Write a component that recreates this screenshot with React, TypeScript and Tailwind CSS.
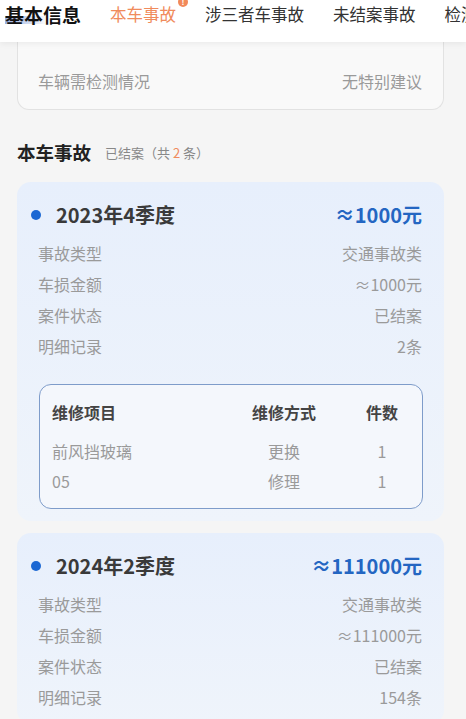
const font = "font-['Noto_Sans_CJK_SC','Noto_Sans',sans-serif]";

type Repair = { item: string; method: string; count: number };

type Accident = {
  period: string;
  amount: string;
  type: string;
  status: string;
  records: string;
  repairs?: Repair[];
};

const accidents: Accident[] = [
  {
    period: "2023年4季度",
    amount: "≈1000元",
    type: "交通事故类",
    status: "已结案",
    records: "2条",
    repairs: [
      { item: "前风挡玻璃", method: "更换", count: 1 },
      { item: "05", method: "修理", count: 1 },
    ],
  },
  {
    period: "2024年2季度",
    amount: "≈111000元",
    type: "交通事故类",
    status: "已结案",
    records: "154条",
  },
];

function Row({ label, value }: { label: string; value: string }) {
  return (
    <div className="flex h-[31px] items-center justify-between text-[16px] text-[#9a9a9a]">
      <span>{label}</span>
      <span>{value}</span>
    </div>
  );
}

function RepairTable({ repairs }: { repairs: Repair[] }) {
  return (
    <div className="mt-[23px] ml-[22px] mr-[21px] rounded-[12px] border-[1.5px] border-[#7e9cca] bg-[#f4f7fc] pb-[12px] pl-3 pr-[10px] pt-[12px]">
      <div className="grid h-[30px] grid-cols-[1fr_100px_60px] items-center gap-x-[18px] text-[16px] font-bold text-[#444]">
        <span>维修项目</span>
        <span className="text-center">维修方式</span>
        <span className="text-center">件数</span>
      </div>
      <div className="mt-[9px]">
        {repairs.map((r) => (
          <div
            key={r.item}
            className="grid h-[30px] grid-cols-[1fr_100px_60px] items-center gap-x-[18px] text-[16px] text-[#9a9a9a]"
          >
            <span>{r.item}</span>
            <span className="text-center">{r.method}</span>
            <span className="text-center">{r.count}</span>
          </div>
        ))}
      </div>
    </div>
  );
}

function AccidentCard({ a }: { a: Accident }) {
  return (
    <div className="ml-[17px] mr-[22px] rounded-[14px] bg-gradient-to-b from-[#e7effc] to-[#eff4fb] pb-[12px] pt-[20px]">
      <div className="flex h-[26px] items-center justify-between pl-[14px] pr-[22px]">
        <div className="flex items-center">
          <span className="h-[10px] w-[10px] rounded-full bg-[#1c68d3]" />
          <span className="ml-[15px] text-[20px] font-bold text-[#3a3a3a]">{a.period}</span>
        </div>
        <span className="text-[20px] font-bold text-[#2466c2]">{a.amount}</span>
      </div>
      <div className="mt-[9px] pl-[21px] pr-[22px]">
        <Row label="事故类型" value={a.type} />
        <Row label="车损金额" value={a.amount} />
        <Row label="案件状态" value={a.status} />
        <Row label="明细记录" value={a.records} />
      </div>
      {a.repairs ? <RepairTable repairs={a.repairs} /> : null}
    </div>
  );
}

export default function App() {
  return (
    <div className={`${font} h-[719px] w-[466px] overflow-hidden bg-[#f5f5f5]`}>
      <div className="relative z-10 flex h-[42px] items-start gap-[29px] overflow-hidden whitespace-nowrap bg-white pl-[5px] pt-[1px] shadow-[0_2px_6px_rgba(0,0,0,0.06)]">
        <span className="relative text-[19px] font-bold leading-[28px] text-[#111]">
          <span className="absolute bottom-[5px] left-0 h-[8px] w-[44px] bg-gradient-to-r from-[#6d8fd6] to-transparent opacity-70" />
          <span className="relative">基本信息</span>
        </span>
        <span className="relative text-[16.5px] leading-[26px] text-[#f08b5c]">
          本车事故
          <span className="absolute -right-[12px] -top-[4px] flex h-[10px] w-[10px] items-center justify-center rounded-full bg-[#f2895a] text-[8px] font-bold leading-none text-white">
            !
          </span>
        </span>
        <span className="text-[16.5px] leading-[26px] text-[#333]">涉三者车事故</span>
        <span className="text-[16.5px] leading-[26px] text-[#333]">未结案事故</span>
        <span className="text-[16.5px] leading-[26px] text-[#333]">检测报告</span>
      </div>

      <div className="ml-[17px] mr-[22px] rounded-b-[12px] border border-t-0 border-[#e2e2e2] bg-[#f9f9f9] pb-[13px] pl-[20px] pr-[21px] pt-[23px]">
        <Row label="车辆需检测情况" value="无特别建议" />
      </div>

      <div className="ml-[17px] mt-[30px] mb-[16px] flex h-[26px] items-center">
        <span className="text-[18.5px] font-bold text-[#222]">本车事故</span>
        <span className="ml-[14px] text-[13px] text-[#888]">
          已结案（共 <span className="text-[#f08b5c]">2</span> 条）
        </span>
      </div>

      <div className="flex flex-col gap-[12px]">
        {accidents.map((a) => (
          <AccidentCard key={a.period} a={a} />
        ))}
      </div>
    </div>
  );
}
